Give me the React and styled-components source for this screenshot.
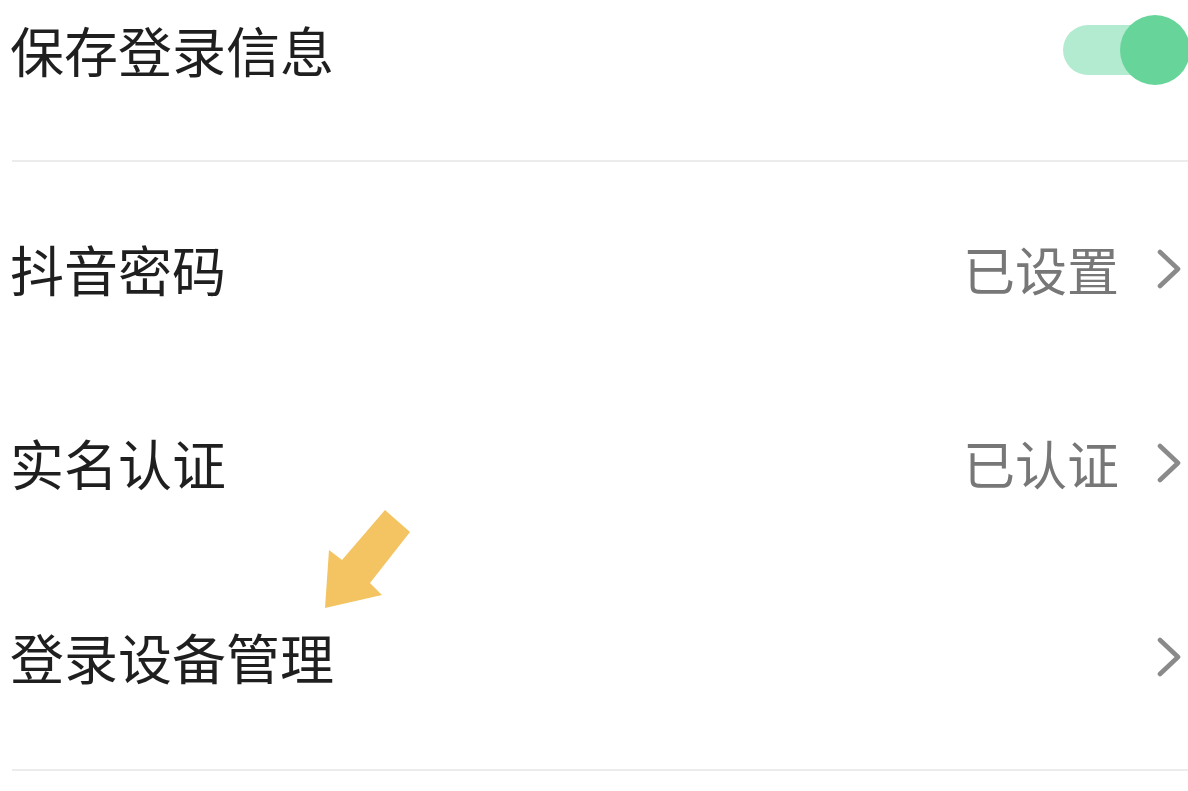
import React, { useState } from "react";
import styled, { createGlobalStyle } from "styled-components";

const GlobalStyle = createGlobalStyle`
  html, body {
    margin: 0;
    padding: 0;
    background: #ffffff;
    overflow: hidden;
  }
  body {
    font-family: "Noto Sans CJK SC", "Noto Sans", sans-serif;
  }
`;

const rows = [
  { label: "抖音密码", value: "已设置" },
  { label: "实名认证", value: "已认证" },
  { label: "登录设备管理", value: "" },
];

const App = () => {
  const [saved, setSaved] = useState(true);

  return (
    <>
      <GlobalStyle />
      <Page>
        <TopRow>
          <Label>保存登录信息</Label>
          <Toggle $on={saved} onClick={() => setSaved(!saved)}>
            <Knob $on={saved} />
          </Toggle>
        </TopRow>
        <Divider />
        <List>
          {rows.map((r) => (
            <Row key={r.label}>
              <Label>{r.label}</Label>
              <Right>
                {r.value && <Value>{r.value}</Value>}
                <Chevron viewBox="0 0 24 40">
                  <path
                    d="M3 3 L21 20 L3 37"
                    fill="none"
                    stroke="#8a8a8a"
                    strokeWidth="4.6"
                    strokeLinecap="round"
                    strokeLinejoin="round"
                  />
                </Chevron>
              </Right>
            </Row>
          ))}
        </List>
        <Divider />
        {/* pointer drawn over the list, aimed at the last row */}
        <Arrow viewBox="0 0 88 100">
          <polygon
            points="61,0 86,22 46,73 58,85 1,98 5,40 18,50"
            fill="#f4c463"
          />
        </Arrow>
      </Page>
    </>
  );
};

const Page = styled.div`
  position: relative;
  width: 1188px;
  height: 791px;
  padding-left: 12px;
  box-sizing: border-box;
  background: #fff;
`;

const TopRow = styled.div`
  display: flex;
  align-items: center;
  justify-content: space-between;
  height: 100px;
  margin-bottom: 60px;
`;

const Label = styled.div`
  font-size: 54px;
  color: #1f1f1f;
  line-height: 1;
  margin-left: -2px;
`;

const Toggle = styled.div`
  position: relative;
  width: 127px;
  height: 50px;
  border-radius: 25px;
  background: ${(p) => (p.$on ? "#b3ebd1" : "#e2e2e2")};
  margin-right: -2px;
  cursor: pointer;
`;

const Knob = styled.div`
  position: absolute;
  top: -10px;
  left: ${(p) => (p.$on ? "57px" : "-10px")};
  width: 70px;
  height: 70px;
  border-radius: 50%;
  background: #67d59a;
`;

const Divider = styled.div`
  height: 2px;
  background: #ececec;
`;

const List = styled.div`
  display: flex;
  flex-direction: column;
  padding-top: 10px;
  padding-bottom: 15px;
`;

const Row = styled.div`
  display: flex;
  align-items: center;
  justify-content: space-between;
  height: 194px;
`;

const Right = styled.div`
  display: flex;
  align-items: center;
  gap: 38px;
  padding-right: 7px;
`;

const Value = styled.span`
  font-size: 52px;
  color: #777777;
  line-height: 1;
`;

const Chevron = styled.svg`
  width: 24px;
  height: 40px;
`;

const Arrow = styled.svg`
  position: absolute;
  left: 324px;
  top: 510px;
  width: 88px;
  height: 100px;
`;

export default App;
